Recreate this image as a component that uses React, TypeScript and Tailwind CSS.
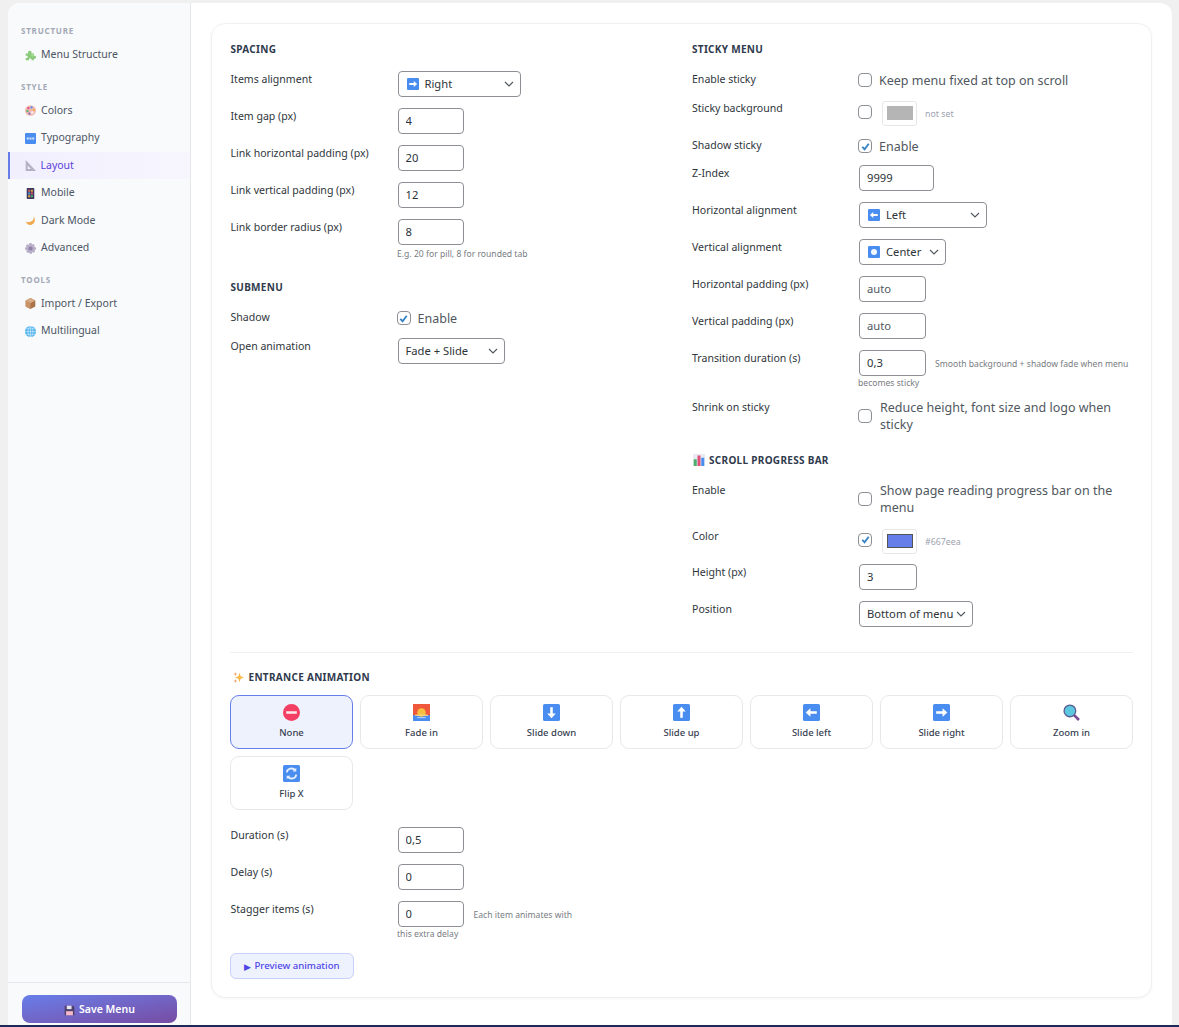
import type { ReactNode } from "react";

const BlueBox = ({ children }: { children?: ReactNode }) => (
  <svg viewBox="0 0 16 16" className="h-full w-full">
    <rect x="0" y="0" width="16" height="16" rx="1.5" fill="#4a8df0" />
    {children}
  </svg>
);

const icons: Record<string, ReactNode> = {
  puzzle: (
    <svg viewBox="0 0 16 16" className="h-full w-full">
      <path d="M1 5h3.500C4 3 5 1 7 1s3 2 2.500 4H13v3.500c1-.5 3 0 3 2s-2 2.500-3 2V15H9.500c.5-1.500-.5-2.500-2-2.500S5.500 13.500 6 15H1v-3.500c1.500.5 3 0 3-1.500S2.500 8 1 8.500z" fill="#8ccb7c" />
      <path d="M9.500 5H13v3.500L11 10 8 7z" fill="#a4db94" />
    </svg>
  ),
  palette: (
    <svg viewBox="0 0 16 16" className="h-full w-full">
      <ellipse cx="8" cy="8" rx="8" ry="7.500" fill="#f2b8b0" />
      <circle cx="5" cy="4.500" r="1.700" fill="#e0508a" />
      <circle cx="9.500" cy="3.500" r="1.600" fill="#4a8df0" />
      <circle cx="13" cy="7" r="1.600" fill="#f0b040" />
      <circle cx="3.500" cy="9" r="1.600" fill="#50b070" />
      <circle cx="6.500" cy="12.500" r="1.600" fill="#7a6ad0" />
      <circle cx="10.500" cy="11" r="2" fill="#fbeeea" />
    </svg>
  ),
  abc: (
    <BlueBox>
      <rect x="2.500" y="6.500" width="3" height="3" fill="#cfe1fb" />
      <rect x="6.500" y="6.500" width="3" height="3" fill="#cfe1fb" />
      <rect x="10.500" y="6.500" width="3" height="3" fill="#cfe1fb" />
    </BlueBox>
  ),
  ruler: (
    <svg viewBox="0 0 16 16" className="h-full w-full">
      <path d="M1 0l15 16H1z" fill="#b5b0c4" />
      <path d="M4 8l4.500 5H4z" fill="#f3f1fe" />
    </svg>
  ),
  mobile: (
    <svg viewBox="0 0 16 16" className="h-full w-full">
      <rect x="2.500" y="0" width="11" height="16" rx="1.200" fill="#3b3560" />
      <rect x="4.500" y="2.500" width="3" height="3" fill="#d65c5c" />
      <rect x="8.500" y="2.500" width="3" height="3" fill="#e0a040" />
      <rect x="4.500" y="6.500" width="3" height="3" fill="#50a0d0" />
      <rect x="8.500" y="6.500" width="3" height="3" fill="#d65c5c" />
      <rect x="4.500" y="10.500" width="3" height="3" fill="#e0a040" />
      <rect x="8.500" y="10.500" width="3" height="3" fill="#50b070" />
    </svg>
  ),
  moon: (
    <svg viewBox="0 0 16 16" className="h-full w-full">
      <path d="M12.500 1c1.500 5-2 9.500-7.500 9.500-1.500 0-3-.5-4-1.500 1 3.500 4 6 7.500 5.500 5-.8 8-7 4-13.500z" fill="#f0a850" />
    </svg>
  ),
  gear: (
    <svg viewBox="0 0 16 16" className="h-full w-full">
      <path d="M6.500 0h3l.5 2.300 2.200-1 2 2-1 2.200L16 6.500v3l-2.300.5 1 2.200-2 2-2.200-1-.5 2.300h-3L6 13.700l-2.200 1-2-2 1-2.200L0 9.500v-3L2.300 6l-1-2.200 2-2 2.200 1z" fill="#b8aec8" />
      <circle cx="8" cy="8" r="3" fill="#8e82a6" />
    </svg>
  ),
  box: (
    <svg viewBox="0 0 16 16" className="h-full w-full">
      <path d="M8 0l7 3.500v9L8 16l-7-3.500v-9z" fill="#a87448" />
      <path d="M8 7.500V16l-7-3.500v-9z" fill="#c89468" />
      <path d="M8 0l7 3.500L8 7.500 1 3.500z" fill="#d8ac84" />
    </svg>
  ),
  globe: (
    <svg viewBox="0 0 16 16" className="h-full w-full">
      <circle cx="8" cy="8" r="8" fill="#52b4ec" />
      <path d="M8 0v16M0 8h16M1.500 4h13M1.500 12h13" stroke="#c4e6fa" strokeWidth="1" fill="none" />
      <ellipse cx="8" cy="8" rx="3.500" ry="8" stroke="#c4e6fa" strokeWidth="1" fill="none" />
    </svg>
  ),
  floppy: (
    <svg viewBox="0 0 16 16" className="h-full w-full">
      <path d="M1 1h12l2 2v12H1z" fill="#4e3f6c" />
      <rect x="4" y="1" width="7" height="5" fill="#e8e4f0" />
      <rect x="3" y="9" width="10" height="6" fill="#f4b8c8" />
    </svg>
  ),
  chart: (
    <svg viewBox="0 0 16 16" className="h-full w-full">
      <rect x="0" y="0" width="16" height="16" fill="#e8ebf2" />
      <rect x="1" y="7" width="4" height="9" fill="#4caf70" />
      <rect x="6" y="2" width="4" height="14" fill="#e0507a" />
      <rect x="11" y="5" width="4" height="11" fill="#4a8df0" />
    </svg>
  ),
  sparkles: (
    <svg viewBox="0 0 16 16" className="h-full w-full">
      <path d="M9.500 1l1.700 5.300L16 8l-4.800 1.700L9.500 15 7.800 9.700 3 8l4.800-1.700z" fill="#f8b848" />
      <path d="M3.500 0l.8 2.200 2.200.8-2.200.8-.8 2.200-.8-2.200L.5 3l2.200-.8z" fill="#f0a070" />
      <path d="M3.500 10l.8 2.200 2.200.8-2.200.8-.8 2.200-.8-2.200L.5 13l2.200-.8z" fill="#f0a070" />
    </svg>
  ),
  none: (
    <svg viewBox="0 0 16 16" className="h-full w-full">
      <circle cx="8" cy="8" r="8" fill="#f43f64" />
      <rect x="3" y="6.800" width="10" height="2.400" fill="#fbe8ec" />
    </svg>
  ),
  sunrise: (
    <svg viewBox="0 0 16 16" className="h-full w-full">
      <rect width="16" height="16" fill="#f0583c" />
      <rect y="10.500" width="16" height="5.500" fill="#4a8df0" />
      <circle cx="8" cy="8" r="4" fill="#f8c040" />
      <rect x="2" y="10" width="12" height="1.200" fill="#fbd880" />
      <rect x="4" y="12.500" width="8" height="0.800" fill="#cfe1fb" />
    </svg>
  ),
  down: (
    <BlueBox>
      <path d="M8 3v8" stroke="#fff" strokeWidth="2.400" fill="none" />
      <path d="M4 9h8l-4 4.500z" fill="#fff" />
    </BlueBox>
  ),
  up: (
    <BlueBox>
      <path d="M8 13V5" stroke="#fff" strokeWidth="2.400" fill="none" />
      <path d="M4 7h8L8 2.500z" fill="#fff" />
    </BlueBox>
  ),
  left: (
    <BlueBox>
      <path d="M13 8H5" stroke="#fff" strokeWidth="2.400" fill="none" />
      <path d="M7 4v8L2.500 8z" fill="#fff" />
    </BlueBox>
  ),
  right: (
    <BlueBox>
      <path d="M3 8h8" stroke="#fff" strokeWidth="2.400" fill="none" />
      <path d="M9 4v8l4.500-4z" fill="#fff" />
    </BlueBox>
  ),
  center: (
    <BlueBox>
      <circle cx="8" cy="8" r="4" fill="#f4f7fe" />
    </BlueBox>
  ),
  zoom: (
    <svg viewBox="0 0 16 16" className="h-full w-full">
      <path d="M10 10l5 5" stroke="#7a4a90" strokeWidth="2.500" />
      <circle cx="6.500" cy="6.500" r="5.500" fill="#5cc8e0" stroke="#5a5a90" strokeWidth="1.200" />
    </svg>
  ),
  flip: (
    <BlueBox>
      <path d="M3.500 7a4.500 4.500 0 0 1 8-2M12.500 9a4.500 4.500 0 0 1-8 2" stroke="#e4eefd" strokeWidth="1.800" fill="none" />
      <path d="M12.500 2.500v3.500H9zM3.500 13.500V10H7z" fill="#e4eefd" />
    </BlueBox>
  ),
};

const Emoji = ({ name, size = "h-3 w-3" }: { name: string; size?: string }) => (
  <span className={`inline-block shrink-0 ${size}`}>{icons[name]}</span>
);

const sidebar = [
  { title: "STRUCTURE", items: [["puzzle", "Menu Structure"]] },
  {
    title: "STYLE",
    items: [
      ["palette", "Colors"],
      ["abc", "Typography"],
      ["ruler", "Layout"],
      ["mobile", "Mobile"],
      ["moon", "Dark Mode"],
      ["gear", "Advanced"],
    ],
  },
  {
    title: "TOOLS",
    items: [
      ["box", "Import / Export"],
      ["globe", "Multilingual"],
    ],
  },
];

const animations = [
  ["none", "None"],
  ["sunrise", "Fade in"],
  ["down", "Slide down"],
  ["up", "Slide up"],
  ["left", "Slide left"],
  ["right", "Slide right"],
  ["zoom", "Zoom in"],
  ["flip", "Flip X"],
];

const Heading = ({ children, className = "mb-[15px]" }: { children: ReactNode; className?: string }) => (
  <div className={`flex h-[14px] items-center gap-[5px] pl-[0.5px] text-[10px] font-bold tracking-[0.3px] text-[#2f3a4d] ${className}`}>
    {children}
  </div>
);

const Row = ({ label, children }: { label: string; children: ReactNode }) => (
  <div className="mb-[11px] flex items-start">
    <div className="h-4 w-[167.5px] shrink-0 pl-[0.5px] text-[10.55px] leading-4 text-[#2f363c]">{label}</div>
    <div className="min-w-0 flex-1">{children}</div>
  </div>
);

const Field = ({ value, width, muted }: { value: string; width: string; muted?: boolean }) => (
  <input
    readOnly
    value={value}
    className={`block h-[26px] rounded border border-[#8c8f94] bg-white px-[7px] pb-[2px] text-[11.2px] outline-none ${width} ${muted ? "text-[#50575e]" : "text-[#2c3338]"}`}
  />
);

const Select = ({ icon, value, width }: { icon?: string; value: string; width: string }) => (
  <div className={`flex h-[26px] items-center rounded border border-[#8c8f94] bg-white pl-[7px] pr-[6px] text-[11.2px] text-[#2c3338] ${width}`}>
    {icon && <Emoji name={icon} size="ml-px mr-[6px] h-3 w-3" />}
    <span className="flex-1 whitespace-nowrap">{value}</span>
    <svg viewBox="0 0 10 6" className="h-[6px] w-[10px] shrink-0" fill="none" stroke="#50575e" strokeWidth="1.100">
      <path d="M1 1l4 4 4-4" />
    </svg>
  </div>
);

const Check = ({ on, className = "" }: { on?: boolean; className?: string }) => (
  <span className={`-ml-px flex h-[14px] w-[14px] shrink-0 items-center justify-center rounded-[4px] border border-[#8c8f94] bg-white ${className}`}>
    {on && (
      <svg viewBox="0 0 12 12" className="h-[11px] w-[11px]" fill="none" stroke="#3582c4" strokeWidth="2">
        <path d="M2.500 6.500l2.500 2.500 4.500-6" />
      </svg>
    )}
  </span>
);

const CheckText = ({ on, className = "gap-[7px]", children }: { on?: boolean; className?: string; children: ReactNode }) => (
  <div className={`flex min-h-[18px] items-center text-[12.5px] leading-[17px] text-[#50575e] ${className}`}>
    <Check on={on} />
    <span>{children}</span>
  </div>
);

const Swatch = ({ on, inner, text, className = "" }: { on?: boolean; inner: string; text: string; className?: string }) => (
  <div className={`flex h-[26px] items-center ${className}`}>
    <Check on={on} className="mb-[3px]" />
    <span className="ml-[10px] flex h-[25px] w-[35px] items-center justify-center rounded-[3px] border border-[#e5e7eb] bg-white">
      <span className={`block h-[14px] w-[26px] ${inner}`} />
    </span>
    <span className="ml-2 mt-[4px] text-[8.8px] text-[#9ca3af]">{text}</span>
  </div>
);

const Hint = ({ children, className = "" }: { children: ReactNode; className?: string }) => (
  <div className={`whitespace-nowrap text-[8.6px] leading-[14px] text-[#787c82] ${className}`}>{children}</div>
);

export default function App() {
  return (
    <div className="flex h-[1027px] flex-col overflow-hidden bg-[#f0f0f1] pt-[3px] font-['Noto_Sans',sans-serif]">
      <div className="ml-2 mr-[7px] flex min-h-0 flex-1 overflow-hidden rounded-t-xl bg-white">
        {/* Sidebar */}
        <aside className="flex w-[183px] shrink-0 flex-col border-r border-[#e5e7eb] bg-[#f9fafc]">
          <nav className="flex-1 pt-[22px]">
            {sidebar.map((group) => (
              <div key={group.title} className="mb-3">
                <div className="mb-1 flex h-3 items-center pl-[13px] text-[8px] font-bold tracking-[0.8px] text-[#a3a8b4]">
                  {group.title}
                </div>
                {group.items.map(([icon, label]) =>
                  label === "Layout" ? (
                    <div
                      key={label}
                      className="flex h-[27.5px] items-center gap-[5px] border-l-[2.5px] border-[#667eea] bg-gradient-to-r from-[#f1effe] to-[#f7f6fe] pl-[14.500px] pt-px text-[10.5px] text-[#5b3fd8]"
                    >
                      <Emoji name={icon} size="h-[11px] w-[11px]" />
                      {label}
                    </div>
                  ) : (
                    <div key={label} className="flex h-[27.5px] items-center gap-[5px] pl-[17px] pt-px text-[10.5px] text-[#4b5563]">
                      <Emoji name={icon} size="h-[11px] w-[11px]" />
                      {label}
                    </div>
                  ),
                )}
              </div>
            ))}
          </nav>
          <div className="border-t border-[#e5e7eb] pb-[2px] pl-[14px] pr-[13px] pt-3">
            <button className="flex h-[28px] w-full items-center justify-center gap-[4px] rounded-lg bg-gradient-to-br from-[#667eea] to-[#764ba2] pt-[2px] text-[10.5px] font-semibold text-white">
              <Emoji name="floppy" size="h-[11px] w-[11px]" />
              Save Menu
            </button>
          </div>
        </aside>

        {/* Main */}
        <main className="min-w-0 flex-1 p-5">
          <div className="rounded-[14px] border border-[#f0f0f1] bg-white px-[18px] pb-[18px] pt-[18px] shadow-[0_1px_3px_rgba(0,0,0,0.04)]">
            <div className="grid grid-cols-2 gap-x-5">
              <section>
                <Heading>SPACING</Heading>
                <Row label="Items alignment">
                  <Select icon="right" value="Right" width="w-[123px]" />
                </Row>
                <Row label="Item gap (px)">
                  <Field value="4" width="w-[66px]" />
                </Row>
                <Row label="Link horizontal padding (px)">
                  <Field value="20" width="w-[66px]" />
                </Row>
                <Row label="Link vertical padding (px)">
                  <Field value="12" width="w-[66px]" />
                </Row>
                <Row label="Link border radius (px)">
                  <Field value="8" width="w-[66px]" />
                  <Hint className="-ml-[0.5px] mt-[2px]">E.g. 20 for pill, 8 for rounded tab</Hint>
                </Row>
                <Heading className="mb-[15px] mt-[19px]">SUBMENU</Heading>
                <Row label="Shadow">
                  <CheckText on>Enable</CheckText>
                </Row>
                <Row label="Open animation">
                  <Select value="Fade + Slide" width="w-[107px]" />
                </Row>
              </section>

              <section>
                <Heading>STICKY MENU</Heading>
                <Row label="Enable sticky">
                  <CheckText>Keep menu fixed at top on scroll</CheckText>
                </Row>
                <Row label="Sticky background">
                  <Swatch inner="bg-[#b5b5b5]" text="not set" />
                </Row>
                <Row label="Shadow sticky">
                  <CheckText on className="-mb-px gap-[7px]">
                    Enable
                  </CheckText>
                </Row>
                <Row label="Z-Index">
                  <Field value="9999" width="w-[75px]" />
                </Row>
                <Row label="Horizontal alignment">
                  <Select icon="left" value="Left" width="w-[128px]" />
                </Row>
                <Row label="Vertical alignment">
                  <Select icon="center" value="Center" width="w-[87px]" />
                </Row>
                <Row label="Horizontal padding (px)">
                  <Field value="auto" width="w-[67px]" muted />
                </Row>
                <Row label="Vertical padding (px)">
                  <Field value="auto" width="w-[67px]" muted />
                </Row>
                <Row label="Transition duration (s)">
                  <div className="flex items-center">
                    <Field value="0,3" width="w-[67px]" />
                    <Hint className="ml-[9px] mt-[2px]">Smooth background + shadow fade when menu</Hint>
                  </div>
                  <Hint className="-mb-[2px] -ml-px">becomes sticky</Hint>
                </Row>
                <Row label="Shrink on sticky">
                  <CheckText className="gap-2">
                    Reduce height, font size and logo when
                    <br />
                    sticky
                  </CheckText>
                </Row>
                <Heading className="mb-[15px] mt-5">
                  <Emoji name="chart" size="-mr-px ml-px h-3 w-3" />
                  SCROLL PROGRESS BAR
                </Heading>
                <Row label="Enable">
                  <CheckText className="mb-px gap-2">
                    Show page reading progress bar on the
                    <br />
                    menu
                  </CheckText>
                </Row>
                <Row label="Color">
                  <Swatch on inner="border border-[#555] bg-[#667eea]" text="#667eea" className="-mb-px" />
                </Row>
                <Row label="Height (px)">
                  <Field value="3" width="w-[58px]" />
                </Row>
                <Row label="Position">
                  <Select value="Bottom of menu" width="w-[114px]" />
                </Row>
              </section>
            </div>

            <div className="mt-[14px] border-t border-[#f0f0f1]" />

            <Heading className="mb-[11px] mt-[17px]">
              <Emoji name="sparkles" size="ml-[2px] h-[11px] w-[11px]" />
              ENTRANCE ANIMATION
            </Heading>
            <div className="mb-[17px] grid grid-cols-7 gap-[7px]">
              {animations.map(([icon, label]) => (
                <div
                  key={label}
                  className={`flex h-[54px] flex-col items-center rounded-[9px] border pt-2 text-[9.5px] font-medium text-[#374151] ${
                    label === "None" ? "border-[#667eea] bg-[#eef2fd]" : "border-[#e8e8ec] bg-white"
                  }`}
                >
                  <Emoji name={icon} size="h-[17px] w-[17px]" />
                  <span className="mt-[5px] leading-[14px]">{label}</span>
                </div>
              ))}
            </div>

            <Row label="Duration (s)">
              <Field value="0,5" width="w-[66px]" />
            </Row>
            <Row label="Delay (s)">
              <Field value="0" width="w-[66px]" />
            </Row>
            <Row label="Stagger items (s)">
              <div className="flex items-center">
                <Field value="0" width="w-[66px]" />
                <Hint className="ml-[10px] mt-[2px]">Each item animates with</Hint>
              </div>
              <Hint className="-ml-[0.5px]">this extra delay</Hint>
            </Row>
            <button className="mt-3 flex h-[26px] w-[124px] items-center justify-center gap-[3px] rounded-md border border-[#c7d2fe] bg-[#eef2ff] pt-px text-[9.6px] font-medium text-[#4f46e5]">
              <span className="text-[9px]">▶</span>
              Preview animation
            </button>
          </div>
        </main>
      </div>
      <div className="h-[2px] shrink-0 bg-[#1d2a55]" />
    </div>
  );
}
